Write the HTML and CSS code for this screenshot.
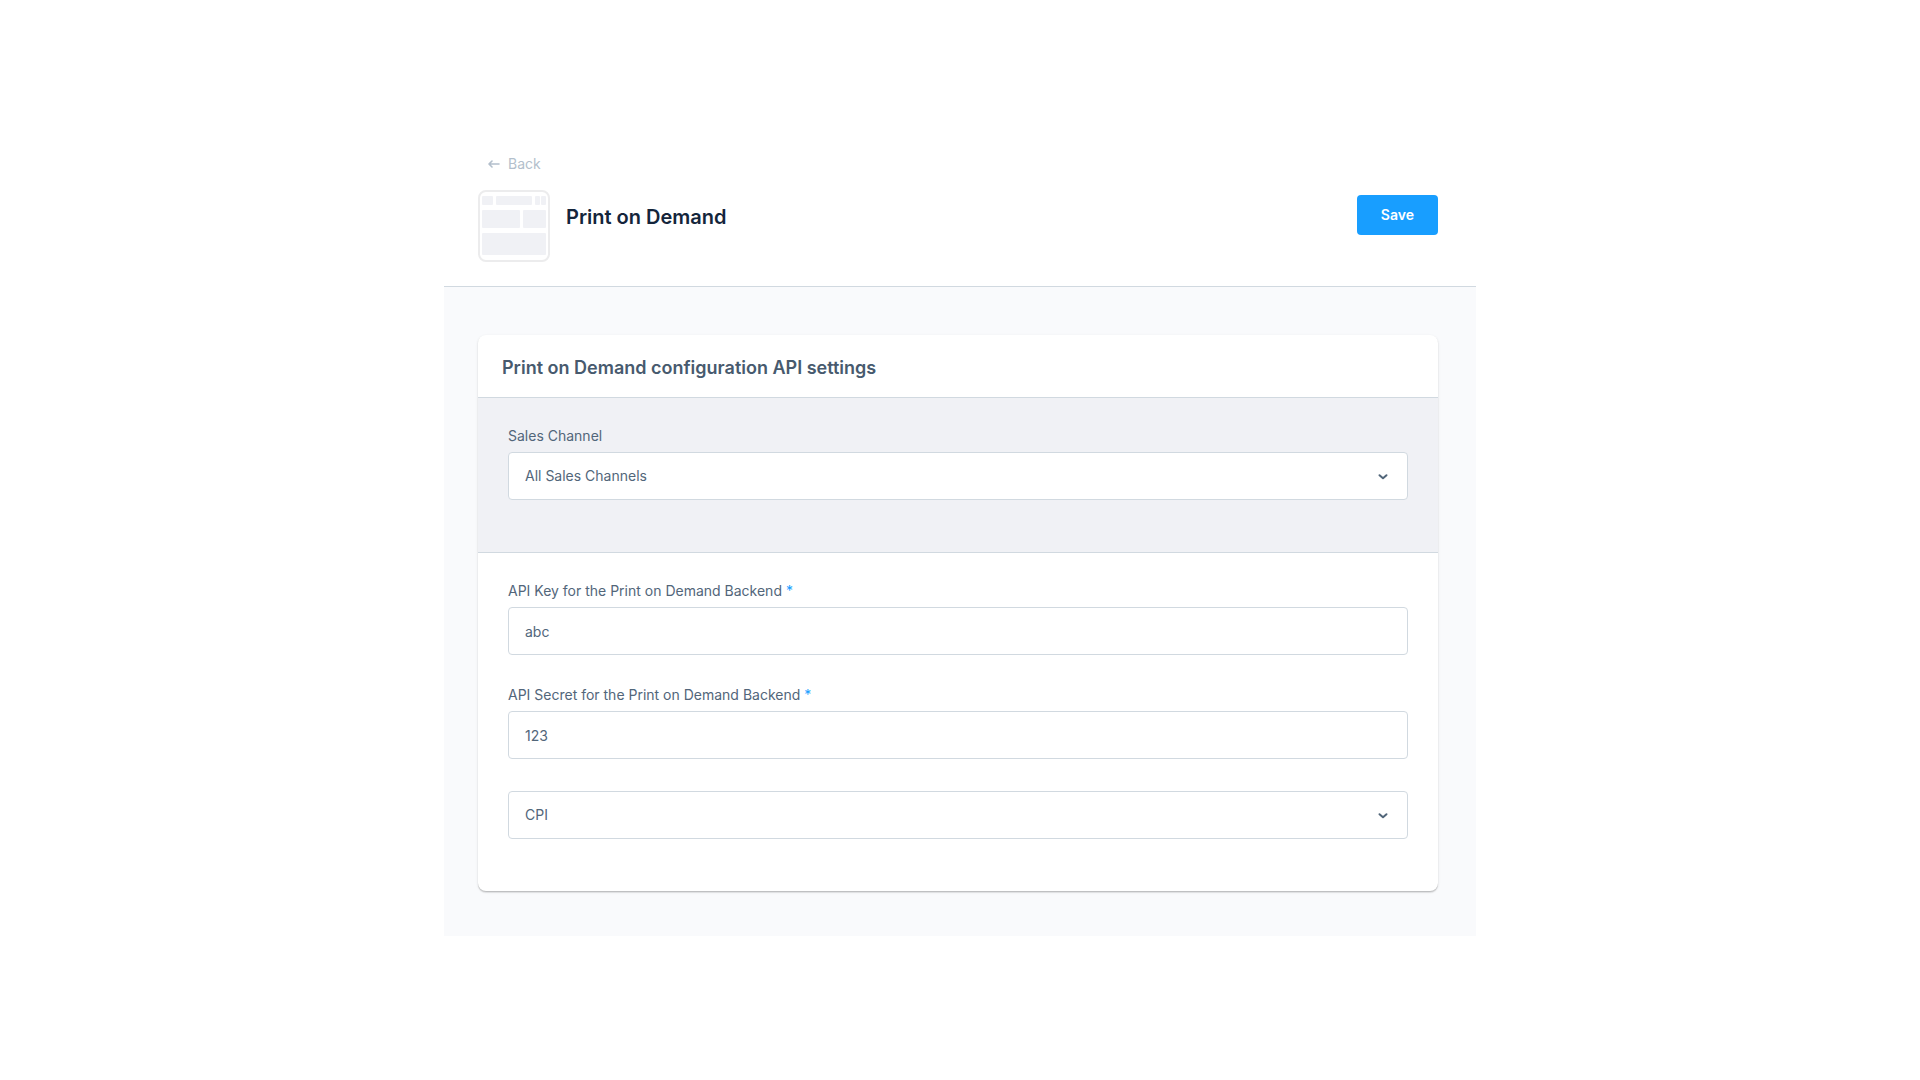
FILE: index.html
```html
<!DOCTYPE html>
<html lang="en">
<head>
  <meta charset="utf-8">
  <meta name="viewport" content="width=device-width, initial-scale=1">
  <title>Print on Demand</title>
  <link rel="stylesheet" href="styles.css">
</head>
<body>
  <main class="page">
    <header class="page-header">
      <a class="back-link" href="#">
        <svg class="back-icon" viewBox="0 0 12 10" aria-hidden="true"><path d="M11 5H1.2M4 2 1 5l3 3"/></svg>
        <span>Back</span>
      </a>
      <div class="title-bar">
        <svg class="plugin-icon" viewBox="0 0 72 72" aria-hidden="true">
          <rect class="plugin-frame" x="1" y="1" width="70" height="70" rx="7"/>
          <rect x="4" y="6" width="11" height="9" rx="1"/>
          <rect x="18" y="6" width="36" height="9" rx="1"/>
          <rect x="57" y="6" width="5" height="9" rx="1"/>
          <rect x="63" y="6" width="5" height="9" rx="1"/>
          <rect x="4" y="20" width="38" height="18" rx="1"/>
          <rect x="45" y="20" width="23" height="18" rx="1"/>
          <rect x="4" y="43" width="64" height="22" rx="1"/>
        </svg>
        <h1 class="page-title">Print on Demand</h1>
        <button class="save-button" type="submit" form="config">Save</button>
      </div>
    </header>
    <form class="card" id="config">
      <h2 class="card-title">Print on Demand configuration API settings</h2>
      <div class="section section-channel">
        <div class="field">
          <label class="label" for="channel">Sales Channel</label>
          <div class="select-wrap">
            <select class="control" id="channel"><option>All Sales Channels</option></select>
            <svg class="chevron" viewBox="0 0 10 8" aria-hidden="true"><path d="M1.5 3.2 5 6.3l3.5-3.1"/></svg>
          </div>
        </div>
      </div>
      <div class="section">
        <div class="field">
          <label class="label" for="api-key">API Key for the Print on Demand Backend <span class="required">*</span></label>
          <input class="control" id="api-key" type="text" value="abc">
        </div>
        <div class="field">
          <label class="label" for="api-secret">API Secret for the Print on Demand Backend <span class="required">*</span></label>
          <input class="control" id="api-secret" type="text" value="123">
        </div>
        <div class="select-wrap">
          <select class="control" id="backend" aria-label="Backend"><option>CPI</option></select>
          <svg class="chevron" viewBox="0 0 10 8" aria-hidden="true"><path d="M1.5 3.2 5 6.3l3.5-3.1"/></svg>
        </div>
      </div>
    </form>
  </main>
</body>
</html>
```
FILE: styles.css
```css
* {
  box-sizing: border-box;
}

body {
  display: flex;
  align-items: center;
  justify-content: center;
  min-height: 100vh;
  margin: 0;
  background: #fff;
  color: #52667a;
  font: 14px/16px Inter, sans-serif;
}

.page {
  width: 100%;
  max-width: 1032px;
  padding-bottom: 45px;
  background: #f9fafc;
}

.page-header {
  padding: 10px 38px 24px 34px;
  border-bottom: 1px solid #d1d9e0;
  background: #fff;
}

.back-link {
  display: inline-flex;
  align-items: center;
  gap: 8px;
  margin-left: 10px;
  color: #b3bfcc;
  line-height: 20px;
  text-decoration: none;
}

.back-icon {
  width: 12px;
  height: 10px;
  fill: none;
  stroke: currentColor;
  stroke-width: 1.6;
  stroke-linecap: round;
  stroke-linejoin: round;
}

.title-bar {
  display: flex;
  gap: 16px;
  margin-top: 16px;
}

.plugin-icon {
  flex: none;
  width: 72px;
  height: 72px;
  fill: #f0f1f5;
}

.plugin-frame {
  fill: #fff;
  stroke: #ececed;
  stroke-width: 2;
}

.page-title {
  flex: 1;
  margin: 0;
  padding-top: 14px;
  color: #14253b;
  font-size: 20px;
  font-weight: 600;
  line-height: 26px;
}

.save-button {
  height: 40px;
  margin-top: 5px;
  padding: 0 24px;
  border: 0;
  border-radius: 4px;
  background: #189eff;
  color: #fff;
  font: 600 14px/40px Inter, sans-serif;
}

.card {
  margin: 48px 38px 0 34px;
  border-radius: 8px;
  background: #fff;
  box-shadow: 0 1px 1px rgba(0, 0, 0, 0.14), 0 2px 1px rgba(0, 0, 0, 0.06), 0 1px 3px rgba(0, 0, 0, 0.1);
}

.card-title {
  margin: 0;
  padding: 21px 24px 17px;
  color: #475a6e;
  font-size: 18px;
  font-weight: 600;
  line-height: 24px;
}

.section {
  display: flex;
  flex-direction: column;
  gap: 32px;
  padding: 30px 30px 52px;
}

.section-channel {
  border: solid #d1d9e0;
  border-width: 1px 0;
  background: #f0f1f5;
}

.field {
  display: flex;
  flex-direction: column;
  gap: 8px;
}

.required {
  color: #189eff;
}

.select-wrap {
  display: grid;
  align-items: center;
}

.select-wrap > * {
  grid-area: 1 / 1;
}

.control {
  width: 100%;
  height: 48px;
  padding: 0 16px;
  border: 1px solid #d1d9e0;
  border-radius: 4px;
  appearance: none;
  background: #fff;
  color: #52667a;
  font: inherit;
}

.chevron {
  justify-self: end;
  width: 10px;
  height: 8px;
  margin-right: 20px;
  fill: none;
  stroke: #52667a;
  stroke-width: 2;
  stroke-linecap: round;
  stroke-linejoin: round;
  pointer-events: none;
}
```
